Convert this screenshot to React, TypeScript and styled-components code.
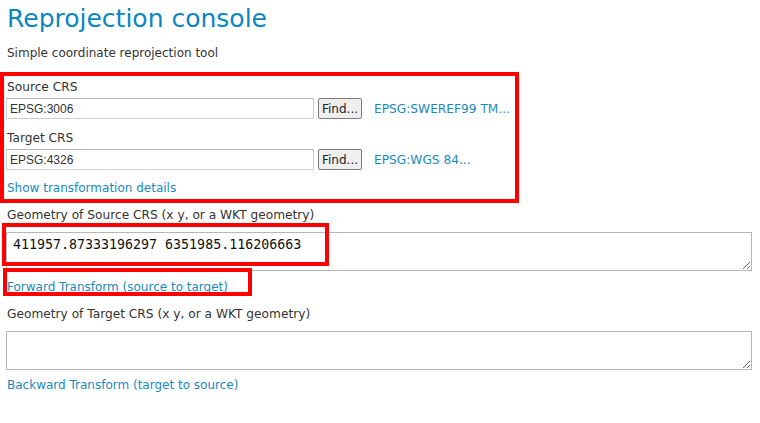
import React from 'react'
import styled, { createGlobalStyle } from 'styled-components'

const GlobalStyle = createGlobalStyle`
  html, body {
    margin: 0;
    padding: 0;
    background: #ffffff;
  }
  body {
    font-family: "DejaVu Sans", Verdana, sans-serif;
    color: #333333;
  }
`

const Page = styled.div`
  position: relative;
  width: 760px;
  height: 423px;
  padding: 0 6px;
  box-sizing: border-box;
  display: flex;
  flex-direction: column;
  overflow: hidden;
`

const Title = styled.h1`
  margin: 4px 0 0 1px;
  font-size: 25px;
  line-height: 30px;
  font-weight: normal;
  color: #0a86c3;
`

const Text = styled.div<{ $top: number; $size?: number }>`
  margin: ${p => p.$top}px 0 0 1px;
  font-size: ${p => p.$size ?? 12.2}px;
  line-height: 16px;
  color: #333333;
`

const Link = styled.a<{ $top: number }>`
  display: block;
  margin: ${p => p.$top}px 0 0 1px;
  font-size: 12px;
  line-height: 16px;
  color: #1a89c0;
  text-decoration: none;
  cursor: pointer;
`

const CrsRow = styled.div`
  display: flex;
  align-items: center;
  margin-top: 3px;
  height: 21px;
`

const CrsInput = styled.input`
  box-sizing: border-box;
  width: 308px;
  height: 21px;
  margin: 0;
  padding: 1px 3px;
  border: 1px solid #cfcfcf;
  border-top-color: #b9b9b9;
  font-family: "Liberation Sans", Arial, sans-serif;
  font-size: 12px;
  color: #333333;
  outline: none;
`

const FindButton = styled.button`
  box-sizing: border-box;
  margin-left: 4px;
  height: 21px;
  padding: 0 3px;
  border: 1px solid #7a7a7a;
  border-radius: 2px;
  background: #efefef;
  font-family: "DejaVu Sans", Verdana, sans-serif;
  font-size: 12px;
  color: #222222;
`

const CrsName = styled.a`
  margin-left: 12px;
  font-size: 12.2px;
  color: #1a89c0;
  text-decoration: none;
`

const Geometry = styled.textarea<{ $top: number }>`
  box-sizing: border-box;
  display: block;
  width: 746px;
  height: 39px;
  margin: ${p => p.$top}px 0 0 0;
  padding: 2px 6px;
  border: 1px solid #b7b7b7;
  font-family: "DejaVu Sans Mono", "Liberation Mono", monospace;
  font-size: 13.3px;
  line-height: 20px;
  color: #111111;
  resize: vertical;
  outline: none;
`

const Highlight = styled.div<{ $x: number; $y: number; $w: number; $h: number }>`
  position: absolute;
  left: ${p => p.$x}px;
  top: ${p => p.$y}px;
  width: ${p => p.$w}px;
  height: ${p => p.$h}px;
  box-sizing: border-box;
  border: 4px solid #ff0000;
  pointer-events: none;
`

const App = () => {
  return <>
    <GlobalStyle />
    <Page>
      <Title>Reprojection console</Title>
      <Text $top={11} $size={12}>Simple coordinate reprojection tool</Text>

      <Text $top={18}>Source CRS</Text>
      <CrsRow>
        <CrsInput defaultValue="EPSG:3006" />
        <FindButton>Find...</FindButton>
        <CrsName>EPSG:SWEREF99 TM...</CrsName>
      </CrsRow>

      <Text $top={11}>Target CRS</Text>
      <CrsRow>
        <CrsInput defaultValue="EPSG:4326" />
        <FindButton>Find...</FindButton>
        <CrsName>EPSG:WGS 84...</CrsName>
      </CrsRow>

      <Link $top={10}>Show transformation details</Link>

      <Text $top={11}>Geometry of Source CRS (x y, or a WKT geometry)</Text>
      <Geometry $top={9} defaultValue="411957.87333196297 6351985.116206663" />
      <Link $top={8}>Forward Transform (source to target)</Link>

      <Text $top={11}>Geometry of Target CRS (x y, or a WKT geometry)</Text>
      <Geometry $top={9} defaultValue="" />
      <Link $top={7}>Backward Transform (target to source)</Link>

      <Highlight $x={0} $y={72} $w={519} $h={131} />
      <Highlight $x={2} $y={223} $w={327} $h={43} />
      <Highlight $x={3} $y={268} $w={249} $h={28} />
    </Page>
  </>
}

export default App
